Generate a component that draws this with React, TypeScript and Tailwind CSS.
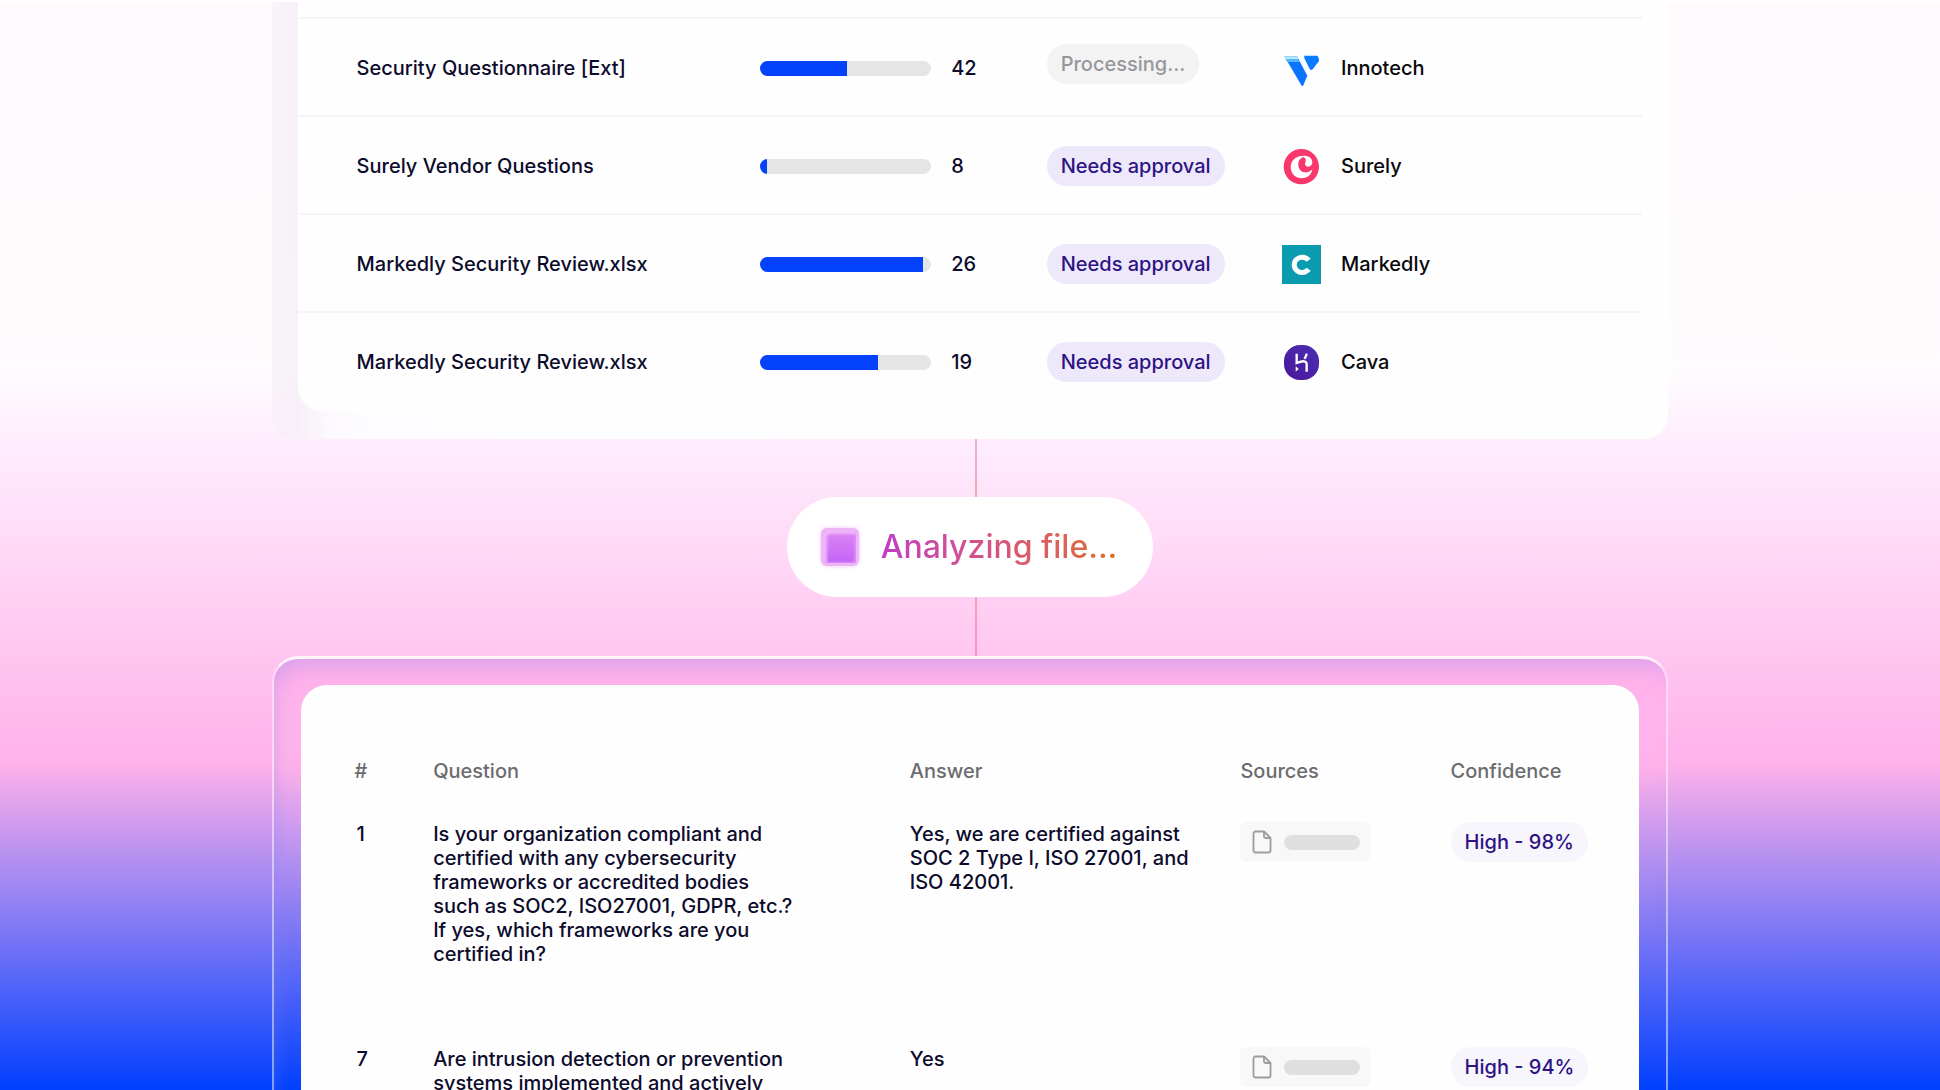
import type { ReactNode } from 'react'

const vendors: { name: string; progress: number; count: number; status: string; company: string; logo: ReactNode }[] = [
  { name: 'Security Questionnaire [Ext]', progress: 51, count: 42, status: 'Processing...', company: 'Innotech', logo: <InnotechLogo /> },
  { name: 'Surely Vendor Questions', progress: 4, count: 8, status: 'Needs approval', company: 'Surely', logo: <SurelyLogo /> },
  { name: 'Markedly Security Review.xlsx', progress: 95, count: 26, status: 'Needs approval', company: 'Markedly', logo: <MarkedlyLogo /> },
  { name: 'Markedly Security Review.xlsx', progress: 69, count: 19, status: 'Needs approval', company: 'Cava', logo: <CavaLogo /> },
]

const answers = [
  {
    id: 1,
    question:
      'Is your organization compliant and\ncertified with any cybersecurity\nframeworks or accredited bodies\nsuch as SOC2, ISO27001, GDPR, etc.?\nIf yes, which frameworks are you\ncertified in?',
    answer: 'Yes, we are certified against\nSOC 2 Type I, ISO 27001, and\nISO 42001.',
    confidence: 'High - 98%',
  },
  {
    id: 7,
    question: 'Are intrusion detection or prevention\nsystems implemented and actively',
    answer: 'Yes',
    confidence: 'High - 94%',
  },
]

function InnotechLogo() {
  return (
    <svg viewBox="0 0 117 117" className="size-[39px]" aria-hidden="true">
      <path d="M7 22h38l31 58-12 29q-3 4-6 0z" fill="#0a76ff" />
      <path d="M7 22h38l4 8H11z" fill="#b5e7ff" />
      <path d="M11 30h38l5 9H16z" fill="#57b4fb" />
      <path d="M67 20h38q6 3 6 16L92 61q-5 4-9-1L67 28z" fill="#0a7cff" />
    </svg>
  )
}

function SurelyLogo() {
  return (
    <svg viewBox="0 0 117 117" className="size-[39px]" aria-hidden="true">
      <circle cx="58" cy="59" r="53" fill="#f9376b" />
      <path d="M64 26C40 26 26 42 26 60c0 20 15 34 34 34 17 0 28-11 31-27-6 7-13 10-21 9-13-1-21-11-21-23 0-11 5-20 15-22 6 1 8 5 7 10 0 4-2 6-2 9 0 6 5 9 10 9 7 0 12-6 12-13 0-12-10-20-27-20z" fill="#fff" />
    </svg>
  )
}

function MarkedlyLogo() {
  return (
    <svg viewBox="0 0 117 117" className="size-[39px]" aria-hidden="true">
      <rect width="117" height="117" fill="#0b9bb0" />
      <path d="M80 46A24 23 0 1 0 80 73" fill="none" stroke="#fff" strokeWidth="15" />
    </svg>
  )
}

function CavaLogo() {
  return (
    <svg viewBox="0 0 117 117" className="size-[39px]" aria-hidden="true">
      <defs>
        <linearGradient id="cava" x1="1" y1="0" x2="0" y2="1">
          <stop offset="0" stopColor="#4a2fb5" />
          <stop offset="1" stopColor="#4a169a" />
        </linearGradient>
      </defs>
      <rect x="6" y="6" width="105" height="105" rx="48" fill="url(#cava)" />
      <path d="M44 32v28q30-12 30 4v22M74 32q-1 8-7 15" fill="none" stroke="#fff" strokeWidth="7" />
      <path d="M41 70v16l9-8z" fill="#fff" />
    </svg>
  )
}

function FileIcon() {
  return (
    <svg viewBox="0 0 20 24" className="h-6 w-5" fill="none" stroke="#9c9c9f" strokeWidth="1.8" strokeLinejoin="round" aria-hidden="true">
      <path d="M3.500 1.500H12L18.500 8V20.500a2 2 0 0 1-2 2h-13a2 2 0 0 1-2-2v-17a2 2 0 0 1 2-2z" />
      <path d="M12 1.500V6.500a1.500 1.500 0 0 0 1.500 1.500h5" />
    </svg>
  )
}

function StatusPill({ status }: { status: string }) {
  if (status === 'Processing...') {
    return (
      <span className="mb-2 inline-flex h-10 items-center rounded-full bg-[#f3f3f3] px-[14px] text-[#97979b]">{status}</span>
    )
  }
  return (
    <span className="inline-flex h-10 items-center rounded-full bg-[#eee8fb] px-[14px] text-[#2e1384]">{status}</span>
  )
}

function VendorTable() {
  return (
    <section className="rounded-b-3xl bg-[linear-gradient(to_right,#f6eff7a0_0px,#f6eff7e0_26px,#fdfafe_60px,#fefdff_110px,#fefefe_100%)] px-[26px] pb-7">
      <div className="rounded-b-3xl bg-[#fefefe] pt-[15px] pb-0.5">
        <table className="w-full table-fixed border-separate border-spacing-0 text-left">
          <colgroup>
            <col className="w-[34.4%]" />
            <col className="w-[21.3%]" />
            <col className="w-[17.5%]" />
            <col />
          </colgroup>
          <tbody>
            {vendors.map((v, i) => (
              <tr key={i} className="h-[98px]">
                <td className="border-t-2 border-[#f4f4f5] pt-0.5 pl-[59px]">{v.name}</td>
                <td className="border-t-2 border-[#f4f4f5] pt-0.5">
                  <div className="flex items-center gap-5">
                    <div className="h-[15px] w-[171px] overflow-hidden rounded-full bg-[#e5e5e6]">
                      <div className="h-full bg-[#0441fb]" style={{ width: `${v.progress}%` }} />
                    </div>
                    <span>{v.count}</span>
                  </div>
                </td>
                <td className="border-t-2 border-[#f4f4f5] pt-0.5">
                  <div className="flex">
                    <StatusPill status={v.status} />
                  </div>
                </td>
                <td className="border-t-2 border-[#f4f4f5] pt-0.5">
                  <div className="flex items-center gap-5 text-[#09090b]">
                    {v.logo}
                    {v.company}
                  </div>
                </td>
              </tr>
            ))}
          </tbody>
        </table>
      </div>
    </section>
  )
}

function AnalyzingBadge() {
  return (
    <div className="flex flex-col items-center">
      <div className="ml-3 h-[58px] w-0.5 bg-linear-to-b from-[#e3b4d0] to-[#f7a8b0]" />
      <div className="flex h-[100px] items-center gap-[22px] rounded-full bg-white pr-9 pl-[34px]">
        <div className="size-[38px] rounded-md bg-[#efb4f7] p-[3px] shadow-[0_0_4px_#f3c4fa]">
          <div className="h-full rounded-[3px] bg-linear-to-b from-[#dc86f2] to-[#c463f8] shadow-[inset_3px_3px_3px_#f0b8fa,inset_-2px_-1px_2px_#d98df8]" />
        </div>
        <span className="bg-linear-to-r from-[#c03cc4] via-[#d8547c] to-[#dd6d1c] bg-clip-text text-[32px] leading-[48px] text-transparent">
          Analyzing file...
        </span>
      </div>
      <div className="ml-3 h-[59px] w-0.5 bg-linear-to-b from-[#f7a3b4] to-[#f193cf]" />
    </div>
  )
}

function AnswerTable() {
  return (
    <section className="rounded-t-[26px] border-x-2 border-t-[3px] border-x-white/50 border-t-white/80 bg-[linear-gradient(to_bottom,#ffb1ea_0px,#ffb1ea_30px,#ffb1ea00_140px)] px-[27px] pt-[26px] shadow-[inset_8px_14px_18px_-6px_rgba(130,130,240,0.28)]">
      <div className="rounded-t-[26px] bg-[#fefefe] pt-[74px]">
        <table className="w-full table-fixed border-separate border-spacing-0 text-left">
          <colgroup>
            <col className="w-[9.9%]" />
            <col className="w-[35.6%]" />
            <col className="w-[24.7%]" />
            <col className="w-[15.7%]" />
            <col />
          </colgroup>
          <thead>
            <tr className="h-[63px] align-top text-[#6c6c70]">
              <th className="pl-[54px] font-[450]">#</th>
              <th className="font-[450]">Question</th>
              <th className="font-[450]">Answer</th>
              <th className="font-[450]">Sources</th>
              <th className="font-[450]">Confidence</th>
            </tr>
          </thead>
          <tbody>
            {answers.map(a => (
              <tr key={a.id} className="h-[225px] align-top">
                <td className="pl-[56px]">{a.id}</td>
                <td className="whitespace-pre-line">{a.question}</td>
                <td className="whitespace-pre-line">{a.answer}</td>
                <td>
                  <div className="flex h-10 w-[130px] items-center gap-3 rounded-md bg-[#f8f8f8] pl-3">
                    <FileIcon />
                    <div className="h-[15px] w-[76px] rounded-full bg-[#dfdfe0]" />
                  </div>
                </td>
                <td>
                  <span className="inline-flex h-10 items-center rounded-full bg-[#f8f6fd] px-[14px] text-[#2e1384]">
                    {a.confidence}
                  </span>
                </td>
              </tr>
            ))}
          </tbody>
        </table>
      </div>
    </section>
  )
}

export default function App() {
  return (
    <main className="h-screen overflow-hidden border-t-2 border-white bg-[linear-gradient(to_bottom,#fffafe_0%,#fefcfe_34%,#ffeefd_40%,#ffb1ea_70%,#0040ff_100%)] px-[14%] font-['Inter','Liberation_Sans',sans-serif] text-[20px] leading-6 font-[450] text-[#0c0b2c]">
      <VendorTable />
      <AnalyzingBadge />
      <AnswerTable />
    </main>
  )
}
